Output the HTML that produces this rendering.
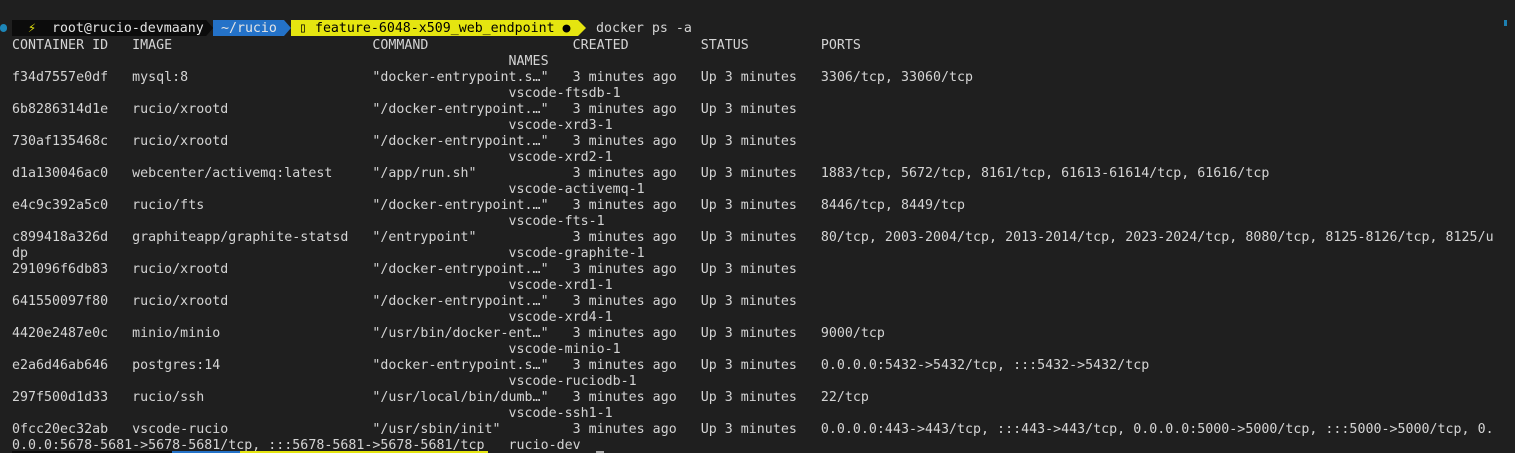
<!DOCTYPE html>
<html><head><meta charset="utf-8"><style>
html,body{margin:0;padding:0;background:#1f1f1f;width:1515px;height:453px;overflow:hidden;position:relative}
pre{position:absolute;left:12px;top:38px;margin:0;font-family:"DejaVu Sans Mono","Liberation Mono",monospace;font-size:13.28px;letter-spacing:0.022px;line-height:16px;color:#d4d4d4;white-space:pre}
.seg{position:absolute;top:20px;height:16px;font-family:"DejaVu Sans Mono","Liberation Mono",monospace;font-size:13.28px;line-height:17px;white-space:pre}
.arr{position:absolute;top:20px;width:0;height:0;border-top:8px solid transparent;border-bottom:8px solid transparent}
</style></head><body>
<div style="position:absolute;left:0;top:24px;width:7px;height:8px;border-radius:4px;background:#1d86b8"></div>
<div class="seg" style="left:12px;width:194px;background:#0c0c0c;color:#e5e5e5">  <span style="color:#e5e510">⚡</span>  root@rucio-devmaany</div>
<div class="arr" style="left:206px;border-left:7px solid #0c0c0c"></div>
<div class="seg" style="left:213px;width:71px;background:#2472c8;color:#e5e5e5"> ~/rucio</div>
<div class="arr" style="left:284px;border-left:7px solid #2472c8"></div>
<div class="arr" style="left:206px;border-left:7px solid #0c0c0c;z-index:2"></div>
<div class="seg" style="left:291px;width:287px;background:#e5e510;color:#000"> ▯ feature-6048-x509_web_endpoint ●</div>
<div class="arr" style="left:578px;border-left:8px solid #e5e510"></div>
<div class="seg" style="left:596px;color:#d4d4d4">docker ps -a</div>
<div style="position:absolute;left:1504px;top:20px;width:3px;height:6px;background:#1d7fb0"></div>
<pre>CONTAINER ID   IMAGE                         COMMAND                  CREATED         STATUS         PORTS
                                                              NAMES
f34d7557e0df   mysql:8                       "docker-entrypoint.s…"   3 minutes ago   Up 3 minutes   3306/tcp, 33060/tcp
                                                              vscode-ftsdb-1
6b8286314d1e   rucio/xrootd                  "/docker-entrypoint.…"   3 minutes ago   Up 3 minutes
                                                              vscode-xrd3-1
730af135468c   rucio/xrootd                  "/docker-entrypoint.…"   3 minutes ago   Up 3 minutes
                                                              vscode-xrd2-1
d1a130046ac0   webcenter/activemq:latest     "/app/run.sh"            3 minutes ago   Up 3 minutes   1883/tcp, 5672/tcp, 8161/tcp, 61613-61614/tcp, 61616/tcp
                                                              vscode-activemq-1
e4c9c392a5c0   rucio/fts                     "/docker-entrypoint.…"   3 minutes ago   Up 3 minutes   8446/tcp, 8449/tcp
                                                              vscode-fts-1
c899418a326d   graphiteapp/graphite-statsd   "/entrypoint"            3 minutes ago   Up 3 minutes   80/tcp, 2003-2004/tcp, 2013-2014/tcp, 2023-2024/tcp, 8080/tcp, 8125-8126/tcp, 8125/u
dp                                                            vscode-graphite-1
291096f6db83   rucio/xrootd                  "/docker-entrypoint.…"   3 minutes ago   Up 3 minutes
                                                              vscode-xrd1-1
641550097f80   rucio/xrootd                  "/docker-entrypoint.…"   3 minutes ago   Up 3 minutes
                                                              vscode-xrd4-1
4420e2487e0c   minio/minio                   "/usr/bin/docker-ent…"   3 minutes ago   Up 3 minutes   9000/tcp
                                                              vscode-minio-1
e2a6d46ab646   postgres:14                   "docker-entrypoint.s…"   3 minutes ago   Up 3 minutes   0.0.0.0:5432->5432/tcp, :::5432->5432/tcp
                                                              vscode-ruciodb-1
297f500d1d33   rucio/ssh                     "/usr/local/bin/dumb…"   3 minutes ago   Up 3 minutes   22/tcp
                                                              vscode-ssh1-1
0fcc20ec32ab   vscode-rucio                  "/usr/sbin/init"         3 minutes ago   Up 3 minutes   0.0.0.0:443->443/tcp, :::443->443/tcp, 0.0.0.0:5000->5000/tcp, :::5000->5000/tcp, 0.
0.0.0:5678-5681->5678-5681/tcp, :::5678-5681->5678-5681/tcp   rucio-dev</pre>
<div style="position:absolute;left:12px;top:451px;width:160px;height:2px;background:#0c0c0c"></div>
<div style="position:absolute;left:172px;top:451px;width:68px;height:2px;background:#2472c8"></div>
<div style="position:absolute;left:240px;top:451px;width:248px;height:2px;background:#e5e510"></div>
<div style="position:absolute;left:596px;top:451px;width:8px;height:2px;background:#aaaaaa"></div>
</body></html>
